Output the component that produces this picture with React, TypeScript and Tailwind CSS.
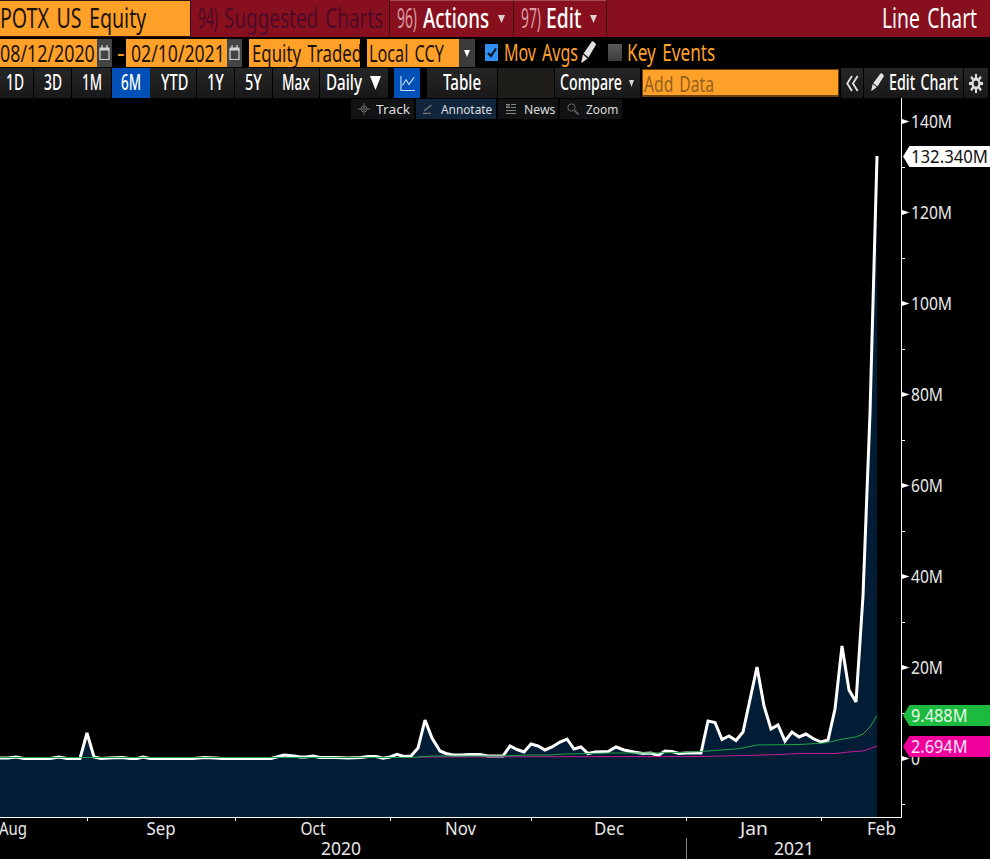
import React, { useLayoutEffect, useRef } from "react";

/* Text condensed or stretched horizontally to fill the width of its box. */
function Fit({ className = "", children }: { className?: string; children: string }) {
  const outer = useRef<HTMLSpanElement>(null);
  const inner = useRef<HTMLSpanElement>(null);
  useLayoutEffect(() => {
    const o = outer.current, i = inner.current;
    if (o && i) i.style.transform = `scaleX(${o.clientWidth / i.offsetWidth})`;
  }, [children]);
  return (
    <span ref={outer} className={`block shrink-0 whitespace-nowrap ${className}`}>
      <span ref={inner} className="inline-block origin-left [word-spacing:0.12em]">{children}</span>
    </span>
  );
}

const Caret = ({ className = "" }: { className?: string }) => (
  <svg className={`shrink-0 ${className}`} viewBox="0 0 8 9" preserveAspectRatio="none" fill="currentColor"><path d="M0 0h8L4 9z" /></svg>
);

const Pencil = ({ className = "" }: { className?: string }) => (
  <svg className={`shrink-0 ${className}`} viewBox="0 0 16 22" preserveAspectRatio="none" fill="#e2e2e2">
    <path d="M11.400 0.800Q12.500-.2 13.600 0.700l1.700 1.600q.9.900.3 2L8 16.600 2.800 12.400z" />
    <path d="M2.200 13.500l4.800 4L1 21.800l-.8-.6z" />
  </svg>
);

const CalendarButton = () => (
  <span className="flex h-[28px] w-[15px] shrink-0 items-center justify-center bg-[#444]">
    <svg className="mb-[2px]" width="11" height="17" viewBox="0 0 11 17" fill="none" stroke="#d5d5d5">
      <path d="M1 5.500v10h9v-10" strokeWidth="1.200" />
      <path d="M0.500 5h10" strokeWidth="3" />
      <path d="M3 1v3M8 1v3" strokeWidth="1.200" />
    </svg>
  </span>
);

const field = "flex h-[28px] shrink-0 items-center bg-[#ffa028] text-[#1c1408]";
const tab = "flex h-[30px] shrink-0 border-r border-black bg-gradient-to-b from-[#262626] to-[#181818]";
const tool = "flex h-[20px] shrink-0 items-center bg-[#111214]";

/* Closing values as x,y pairs in chart pixels */
const price = "0,758 8,758 16,757 24,758.5 50,758.5 59,757 67,758.5 80,758.5 87,733 94,757 101,758.5 109,758 122,757.5 130,758.5 137,758.5 143,757 150,758.5 193,758.5 205,757.5 215,758 222,758.5 271,758.5 284,755 294,756 300,757 306,757 313,756 320,757.5 335,757.5 348,758 361,757.5 368,756.5 376,756.5 383,758.3 390,757 397,754.3 404,756.5 411,756 418,748 425,720 432,738 440,751 446,753.5 453,755 461,755 469,754.5 480,754.5 488,756 503,756 510,746 517,749.5 524,752 531,744 538,746 545,750 552,747 560,742 567,739 574,749 581,747 588,753.5 595,752 608,751.5 616,747 624,750 634,752 643,753.5 651,753 658,755.5 665,751 672,751.5 679,753.5 686,753 701,753 708,721 715,722.5 722,739.5 729,736 736,740.5 743,732 757,667 764,706 771,729 778,725 785,741 792,732 799,737 806,734 813,738.5 821,742 828,740 835,709 842,646 849,690 856,702 863,596 870,413 877,156";
const green = "0,757.5 390,757.5 411,757.5 432,756 450,756 500,756 530,755 550,755 565,754 590,753.5 610,753 640,753 680,752.5 701,751.5 722,750 736,749 745,747.5 757,745 799,744.5 825,743 843,739 856,737 863,734 870,727 877,715.5";
const pink = "418,757 500,756.8 700,756.5 745,755.5 780,754.5 799,753.5 835,753.5 849,752 863,751 870,748.5 877,746";

const yLabels = [
  { t: "140M", y: 121.5, w: 41 }, { t: "120M", y: 212.5, w: 41 }, { t: "100M", y: 303.5, w: 41 },
  { t: "80M", y: 394.5, w: 32 }, { t: "60M", y: 485.5, w: 32 }, { t: "40M", y: 576.5, w: 32 },
  { t: "20M", y: 667.5, w: 32 }, { t: "0", y: 758.5, w: 9 },
];
const xLabels = [
  { t: "Aug", x: -1, y: 835, w: 28 }, { t: "Sep", x: 146.5, y: 835, w: 29 }, { t: "Oct", x: 300.5, y: 835, w: 25 },
  { t: "Nov", x: 445, y: 835, w: 31 }, { t: "Dec", x: 594, y: 835, w: 30 }, { t: "Jan", x: 740, y: 835, w: 28 },
  { t: "Feb", x: 867, y: 835, w: 29 }, { t: "2020", x: 321, y: 855, w: 40 }, { t: "2021", x: 774, y: 855, w: 40 },
];

function Flag({ y, fill, color, text, w }: { y: number; fill: string; color: string; text: string; w: number }) {
  return (
    <g>
      <path d={`M903 ${y}l6.500-10.500H990v21H909.500z`} fill={fill} />
      <text x="911" y={y + 6.5} textLength={w} lengthAdjust="spacingAndGlyphs" fill={color}>{text}</text>
    </g>
  );
}

function Chart() {
  return (
    <svg className="block" width="990" height="761" viewBox="0 98 990 761" fontSize="17.500" fill="#e8e8e8">
      <polygon points={`0,817 ${price} 877,817`} fill="#031d37" />
      <polyline points={price} fill="none" stroke="#fff" strokeWidth="3" strokeLinejoin="miter" strokeMiterlimit="2" />
      <polyline points={pink} fill="none" stroke="#c01c94" strokeWidth="1" />
      <polyline points={green} fill="none" stroke="#22a046" strokeWidth="1" />
      <path d="M0 817.500H901.500V98" fill="none" stroke="#fff" />
      <path d="M87.500 817v4M235.500 817v4M390.500 817v4M531.500 817v4M686.500 817v4M821.500 817v4" stroke="#fff" />
      <path d="M686.500 838v21" stroke="#888" />
      {[167.5, 258.5, 349.5, 440.5, 531.5, 622.5, 713.5, 804.5].map((y) => (
        <path key={y} d={`M902 ${y}h3`} stroke="#fff" />
      ))}
      {yLabels.map((l) => (
        <g key={l.t}>
          <path d={`M902 ${l.y - 2.5}l7.500 2.500-7.500 2.500z`} fill="#fff" />
          <text x="911" y={l.y + 6.5} textLength={l.w} lengthAdjust="spacingAndGlyphs">{l.t}</text>
        </g>
      ))}
      {xLabels.map((l) => (
        <text key={l.t} x={l.x} y={l.y} textLength={l.w} lengthAdjust="spacingAndGlyphs">{l.t}</text>
      ))}
      <Flag y={156.5} fill="#fff" color="#111" text="132.340M" w={77} />
      <Flag y={715.5} fill="#1cba3e" color="#e8ffe8" text="9.488M" w={56.5} />
      <Flag y={746.5} fill="#ef009c" color="#ffe6f6" text="2.694M" w={56.5} />
    </svg>
  );
}

export default function App() {
  return (
    <div className="h-[859px] w-[990px] overflow-hidden bg-black font-['Noto_Sans',sans-serif] text-white">
      <header className="flex h-[37px] bg-[#88101e] text-[27px] leading-[36px]">
        <div className="flex h-[37px] w-[191px] shrink-0 border-t border-r border-b border-[#2b1010] bg-[#ffa028] leading-[34px] text-[#1c1408]">
          <Fit className="w-[146px]">POTX US Equity</Fit>
        </div>
        <div className="flex w-[199px] shrink-0 border-r border-[#400810] pl-[7px] leading-[35px] text-[#4e0a28]">
          <Fit className="w-[20px]">94)</Fit>
          <Fit className="ml-[6px] w-[159px]">Suggested Charts</Fit>
        </div>
        <div className="flex w-[124px] shrink-0 border-t border-r border-t-[#a64b55] border-r-[#400810] pl-[7px] leading-[33px]">
          <Fit className="w-[20px] text-[#d99aa0]">96)</Fit>
          <Fit className="ml-[6px] w-[66px] font-medium">Actions</Fit>
          <Caret className="mt-[14px] ml-[9px] h-[8px] w-[7px] text-[#e0d0d0]" />
        </div>
        <div className="flex w-[93px] shrink-0 border-t border-r border-t-[#a64b55] border-r-[#400810] pl-[7px] leading-[33px]">
          <Fit className="w-[20px] text-[#d99aa0]">97)</Fit>
          <Fit className="ml-[5px] w-[35px] font-medium">Edit</Fit>
          <Caret className="mt-[14px] ml-[9px] h-[8px] w-[7px] text-[#e0d0d0]" />
        </div>
        <Fit className="mr-[13px] ml-auto w-[95px] leading-[35px]">Line Chart</Fit>
      </header>

      <div className="flex h-[31px] pt-[2px] text-[24px] leading-[26px]">
        <div className={`${field} w-[97px]`}><Fit className="w-[95px]">08/12/2020</Fit></div>
        <CalendarButton />
        <Fit className="ml-[5px] w-[8px] text-[#ffa028]">-</Fit>
        <div className={`${field} ml-px w-[101px] pl-[5px]`}><Fit className="w-[94px]">02/10/2021</Fit></div>
        <CalendarButton />
        <div className={`${field} ml-[7px] w-[111px] overflow-hidden pl-[3px]`}><Fit className="w-[110px]">Equity Traded</Fit></div>
        <div className={`${field} ml-[7px] w-[92px] pl-[2px]`}><Fit className="w-[75px]">Local CCY</Fit></div>
        <span className="flex h-[28px] w-[16px] shrink-0 items-center justify-center bg-[#3b3b3b]"><Caret className="h-[7px] w-[6px]" /></span>
        <span className="mt-[5px] ml-[10px] flex h-[17px] w-[13px] shrink-0 items-center justify-center bg-[#2f91f5]">
          <svg width="10" height="11" viewBox="0 0 10 11" fill="none" stroke="#0b1320" strokeWidth="2.200"><path d="M1 6l3 3L9 1.500" /></svg>
        </span>
        <Fit className="ml-[6px] w-[74px] text-[#ffa028]">Mov Avgs</Fit>
        <Pencil className="mt-[2px] ml-[3px] h-[22px] w-[15px]" />
        <span className="mt-[5px] ml-[12px] h-[17px] w-[14px] shrink-0 bg-gradient-to-b from-[#585858] to-[#3c3c3c]" />
        <Fit className="ml-[5px] w-[88px] text-[#ffa028]">Key Events</Fit>
      </div>

      <nav className="flex h-[30px] text-[21.5px] leading-[28px] font-medium">
        <div className={`${tab} w-[34px] pl-[6px]`}><Fit className="w-[18px]">1D</Fit></div>
        <div className={`${tab} w-[38px] pl-[10px]`}><Fit className="w-[18px]">3D</Fit></div>
        <div className={`${tab} w-[40px] pl-[10px]`}><Fit className="w-[20px]">1M</Fit></div>
        <div className="flex w-[38px] shrink-0 bg-[#0050b8] pl-[9px]"><Fit className="w-[20px]">6M</Fit></div>
        <div className={`${tab} w-[47px] pl-[11px]`}><Fit className="w-[27px]">YTD</Fit></div>
        <div className={`${tab} w-[38px] pl-[10px]`}><Fit className="w-[17px]">1Y</Fit></div>
        <div className={`${tab} w-[38px] pl-[10px]`}><Fit className="w-[17px]">5Y</Fit></div>
        <div className={`${tab} w-[47px] pl-[9px]`}><Fit className="w-[28px]">Max</Fit></div>
        <div className={`${tab} w-[69px] pl-[6px]`}>
          <Fit className="w-[36px]">Daily</Fit>
          <Caret className="mt-[8px] ml-[8px] h-[14px] w-[11px]" />
        </div>
        <div className="ml-[5px] flex w-[26px] shrink-0 items-center justify-center bg-[#0050b8]">
          <svg width="15" height="17" viewBox="0 0 16 18" fill="none" stroke="#c9dcf5" strokeWidth="1.200"><path d="M1 1v15.500h15" /><path d="M2.500 11l4-6 3 5L15 2.500" /></svg>
        </div>
        <div className={`${tab} ml-[7px] w-[71px] pl-[16px]`}><Fit className="w-[38px]">Table</Fit></div>
        <div className="w-[57px] shrink-0 border-r border-black bg-[#1f1d19]" />
        <div className={`${tab} w-[86px] pl-[5px]`}>
          <Fit className="w-[62px]">Compare</Fit>
          <Caret className="mt-[12px] ml-[7px] h-[7px] w-[5px] text-[#d8d8d8]" />
        </div>
        <div className="mt-px ml-px h-[28px] w-[197px] shrink-0 border border-b-2 border-[#6d430f] bg-[#ffa028] pl-px leading-[27px] font-normal text-[#93611f]"><Fit className="w-[70px]">Add Data</Fit></div>
        <div className={`${tab} ml-[2px] w-[23px] items-center justify-center`}>
          <svg width="14" height="17" viewBox="0 0 14 18" fill="none" stroke="#ddd" strokeWidth="2"><path d="M7 1L2 9l5 8M13 1L8 9l5 8" /></svg>
        </div>
        <div className={`${tab} w-[100px] pl-[7px]`}>
          <Pencil className="mt-[5px] h-[18px] w-[13px]" />
          <Fit className="ml-[5px] w-[69px]">Edit Chart</Fit>
        </div>
        <div className={`${tab} w-[25px] items-center justify-center`}>
          <svg width="14" height="19" viewBox="-8 -8 16 16" preserveAspectRatio="none" fill="none" stroke="#ddd">
            <circle r="3.900" strokeWidth="2.600" />
            <path d="M0-4.500V-8M0 4.500V8M-4.500 0H-8M4.500 0H8M3.300-3.300l2.400-2.400M-3.300-3.300l-2.400-2.400M3.300 3.300l2.400 2.400M-3.300 3.300l-2.400 2.400" strokeWidth="2.400" />
          </svg>
        </div>
      </nav>

      <main className="relative">
        <Chart />
        <div className="absolute top-px left-[351px] flex gap-[2px] text-[13px] leading-[20px] text-[#dddddd]">
          <div className={`${tool} w-[63px] pl-[7px]`}>
            <svg width="12" height="12" viewBox="0 0 12 12" fill="none" stroke="#666"><circle cx="6" cy="6" r="3" /><path d="M6 0v12M0 6h12" /></svg>
            <Fit className="ml-[6px] w-[34px]">Track</Fit>
          </div>
          <div className="flex h-[20px] w-[80px] items-center bg-[#11263d] pl-[7px]">
            <svg width="10" height="10" viewBox="0 0 10 10" fill="none" stroke="#777"><path d="M1 7L8.500 1M0 9.500h8" strokeWidth="1.400" /></svg>
            <Fit className="ml-[8px] w-[51px]">Annotate</Fit>
          </div>
          <div className={`${tool} w-[60px] pl-[8px]`}>
            <svg width="10" height="10" viewBox="0 0 10 10" stroke="#888"><path d="M0 .500h4M5 .500h5M0 3.500h4M5 3.500h5M0 6.500h10M0 9.500h10M0 2h4" /></svg>
            <Fit className="ml-[8px] w-[31px]">News</Fit>
          </div>
          <div className={`${tool} w-[62px] pl-[7px]`}>
            <svg width="12" height="12" viewBox="0 0 12 12" fill="none" stroke="#666"><circle cx="4.500" cy="4.500" r="3.700" /><path d="M7.500 7.500l4 4" strokeWidth="1.600" /></svg>
            <Fit className="ml-[7px] w-[32px]">Zoom</Fit>
          </div>
        </div>
      </main>
    </div>
  );
}
